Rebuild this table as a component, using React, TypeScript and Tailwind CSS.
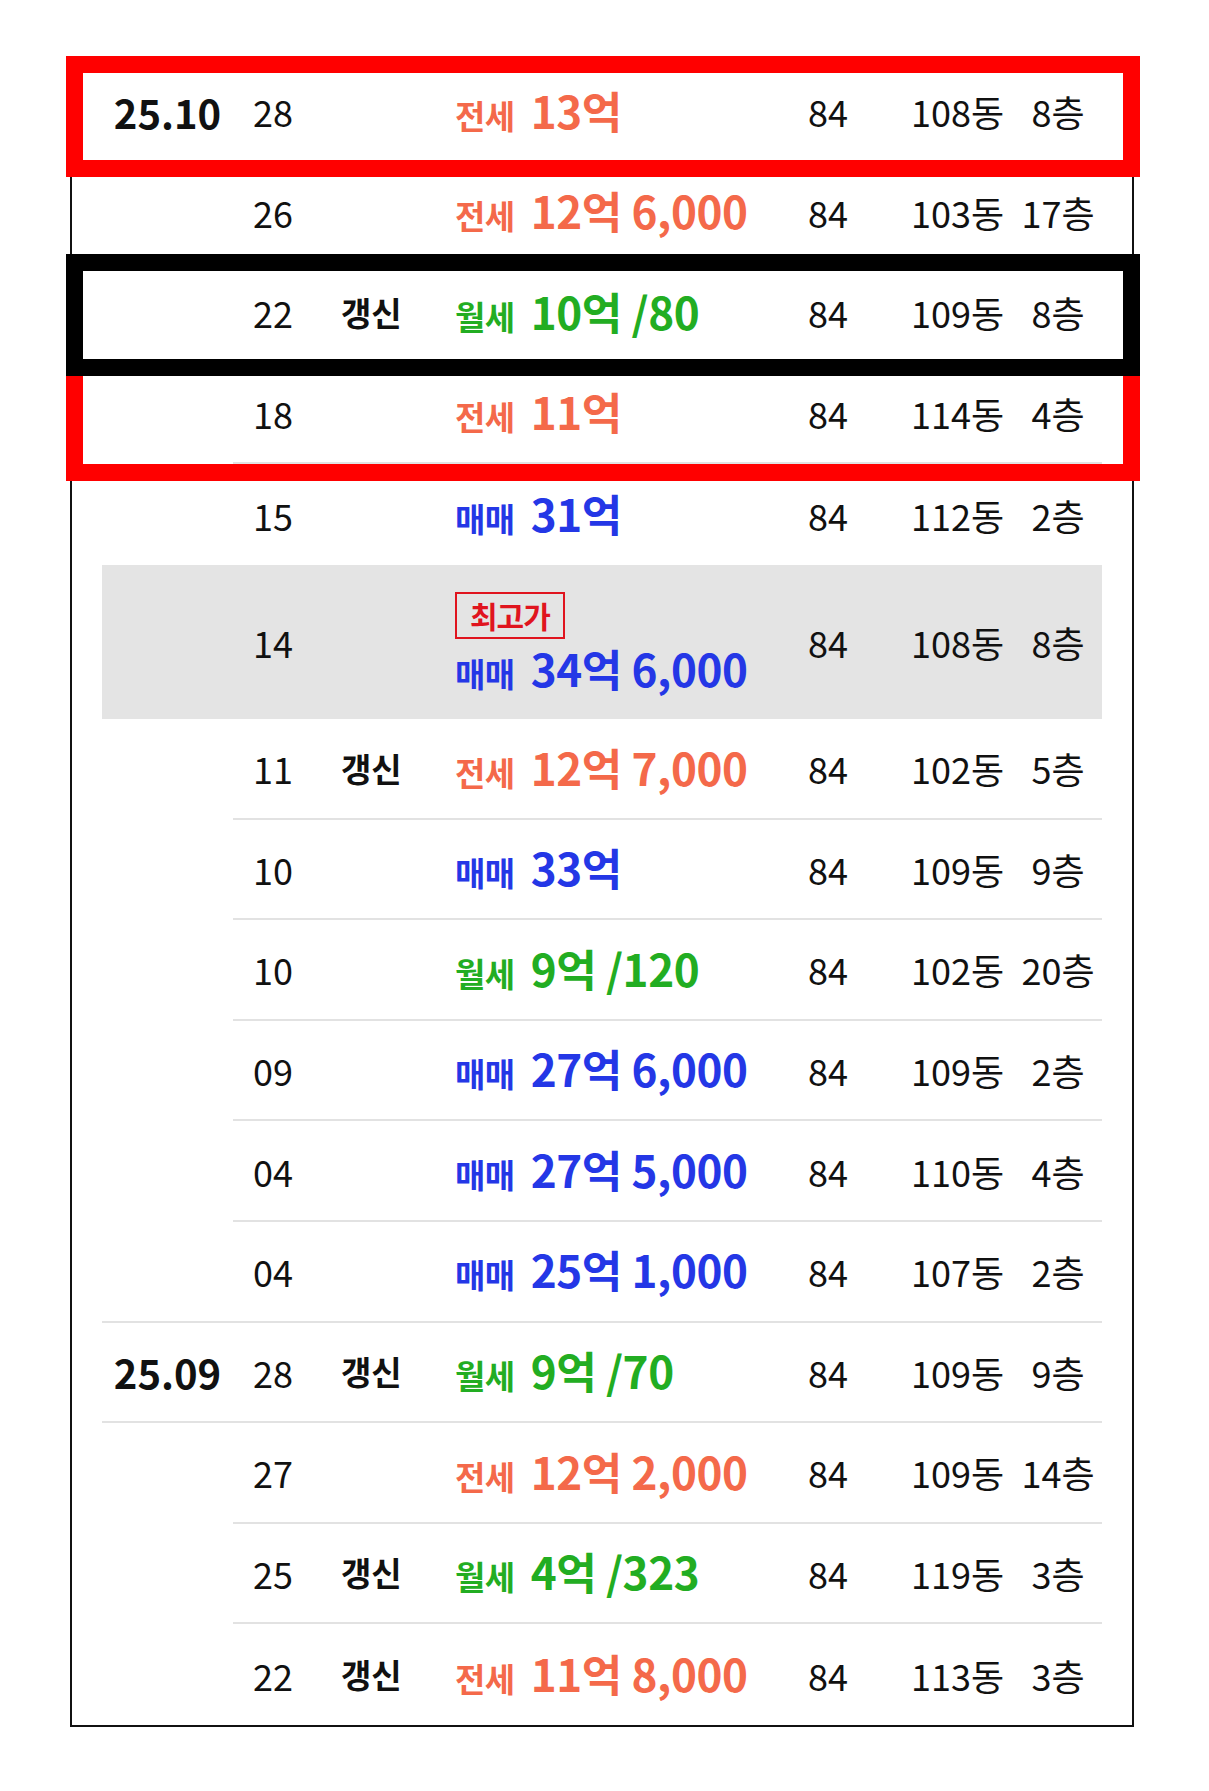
const rows = [
  { date: '25.10', day: '28', type: '전세', price: '13억', dong: '108동', floor: '8층' },
  { day: '26', type: '전세', price: '12억 6,000', dong: '103동', floor: '17층' },
  { day: '22', renew: true, type: '월세', price: '10억 /80', dong: '109동', floor: '8층' },
  { day: '18', type: '전세', price: '11억', dong: '114동', floor: '4층' },
  { day: '15', type: '매매', price: '31억', dong: '112동', floor: '2층', noLine: true },
  { day: '14', type: '매매', price: '34억 6,000', dong: '108동', floor: '8층', top: true },
  { day: '11', renew: true, type: '전세', price: '12억 7,000', dong: '102동', floor: '5층' },
  { day: '10', type: '매매', price: '33억', dong: '109동', floor: '9층' },
  { day: '10', type: '월세', price: '9억 /120', dong: '102동', floor: '20층' },
  { day: '09', type: '매매', price: '27억 6,000', dong: '109동', floor: '2층' },
  { day: '04', type: '매매', price: '27억 5,000', dong: '110동', floor: '4층' },
  { day: '04', type: '매매', price: '25억 1,000', dong: '107동', floor: '2층', fullLine: true },
  { date: '25.09', day: '28', renew: true, type: '월세', price: '9억 /70', dong: '109동', floor: '9층', fullLine: true },
  { day: '27', type: '전세', price: '12억 2,000', dong: '109동', floor: '14층' },
  { day: '25', renew: true, type: '월세', price: '4억 /323', dong: '119동', floor: '3층' },
  { day: '22', renew: true, type: '전세', price: '11억 8,000', dong: '113동', floor: '3층', noLine: true },
];

const typeColor: Record<string, string> = {
  전세: 'text-[#f4694a]',
  월세: 'text-[#22ad22]',
  매매: 'text-[#2437e6]',
};

type Row = (typeof rows)[number] & { renew?: boolean; top?: boolean; date?: string; noLine?: boolean; fullLine?: boolean };

function Price({ r }: { r: Row }) {
  return (
    <div className={`flex items-baseline whitespace-pre font-semibold ${typeColor[r.type]}`}>
      <span className="text-[33px] tracking-[-0.5px]">{r.type}</span>
      <span className="ml-[16px] text-[44px] leading-[54px] tracking-[-0.4px]">{r.price}</span>
    </div>
  );
}

function TradeRow({ r }: { r: Row }) {
  const partial = !r.noLine && !r.fullLine && !r.top;
  return (
    <div
      className={`flex h-[100.6px] ${r.top ? 'h-[154px] bg-[#e4e4e4]' : ''} ${
        r.fullLine ? 'border-b-2 border-[#e2e2e2]' : ''
      }`}
    >
      <div className="flex w-[131px] items-center justify-center text-[40px] font-bold text-[#111]">
        {r.date}
      </div>
      <div className={`flex flex-1 items-center ${partial ? 'border-b-2 border-[#e2e2e2]' : ''}`}>
        <div className="w-[108px] pl-[20px] text-[36px] text-[#111]">{r.day}</div>
        <div className="w-[114px] text-[33px] font-bold text-[#111]">{r.renew ? '갱신' : ''}</div>
        <div className="w-[353px]">
          {r.top && (
            <div className="mt-[6px] mb-[2px] inline-block border-2 border-[#e0141e] px-[13px] text-[30px] leading-[43px] font-bold tracking-[-1px] text-[#e0141e]">
              최고가
            </div>
          )}
          <Price r={r} />
        </div>
        <div className="w-[103px] text-[36px] text-[#111]">84</div>
        <div className="w-[103px] text-[36px] text-[#111]">{r.dong}</div>
        <div className="flex-1 text-center text-[36px] text-[#111]">{r.floor}</div>
      </div>
    </div>
  );
}

export default function App() {
  return (
    <div
      className="relative min-h-[1791px] w-[1209px] bg-white pt-[60px] pl-[70px]"
      style={{ fontFamily: '"Noto Sans CJK KR", "Noto Sans", sans-serif' }}
    >
      <div className="w-[1064px] border-2 border-[#111] px-[30px]">
        {rows.map((r, i) => (
          <TradeRow key={i} r={r as Row} />
        ))}
      </div>

      {/* 강조 박스 */}
      <div className="absolute left-[66px] top-[359px] h-[122px] w-[1074px] border-[17px] border-[#ff0000]" />
      <div className="absolute left-[66px] top-[56px] h-[121px] w-[1074px] border-[17px] border-[#ff0000]" />
      <div className="absolute left-[66px] top-[254px] h-[122px] w-[1074px] border-[17px] border-black" />
    </div>
  );
}
